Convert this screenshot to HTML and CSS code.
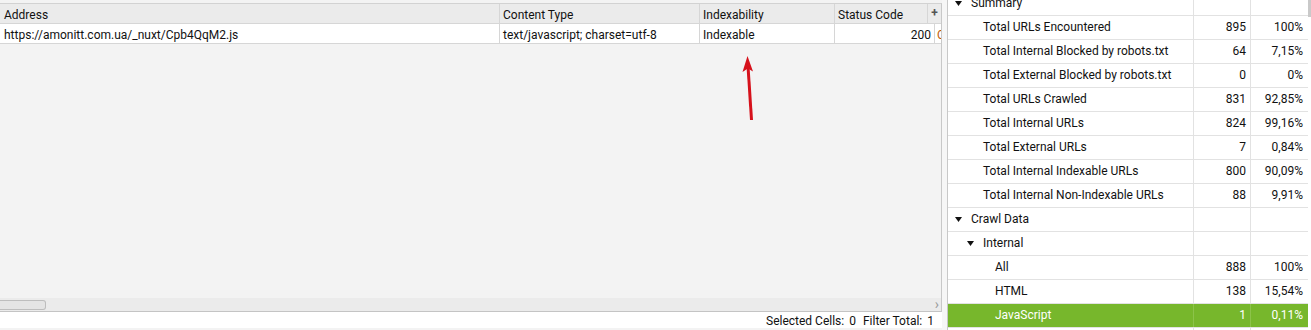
FILE: index.html
```html
<!DOCTYPE html>
<html lang="en">
<head>
    <meta charset="UTF-8">
    <title>Crawl Overview</title>
    <link rel="stylesheet" href="styles.css">
</head>
<body>
    <div class="app">
        <div class="main">
            <div class="grid">
                <div class="row head">
                    <div class="cell c-address">Address</div>
                    <div class="cell c-type">Content Type</div>
                    <div class="cell c-index">Indexability</div>
                    <div class="cell c-status-h">Status Code</div>
                    <div class="cell c-plus">+</div>
                </div>
                <div class="row data">
                    <div class="cell c-address">https://amonitt.com.ua/_nuxt/Cpb4QqM2.js</div>
                    <div class="cell c-type">text/javascript; charset=utf-8</div>
                    <div class="cell c-index">Indexable</div>
                    <div class="cell c-status num">200</div>
                    <div class="cell c-rest">OK</div>
                </div>
                <div class="empty">
                    <svg class="arrow" width="20" height="66" viewBox="0 0 20 66">
                        <path d="M11.5 64 L8 10" stroke="#d6111b" stroke-width="3" fill="none"/>
                        <path d="M7.5 0 L2.5 16 L7.8 12.5 L13 15.5 Z" fill="#d6111b"/>
                    </svg>
                </div>
                <div class="hscroll">
                    <div class="thumb"></div>
                    <span class="chev">&rsaquo;</span>
                </div>
            </div>
            <div class="status">
                <span>Selected Cells:</span><span class="val">0</span>
                <span>Filter Total:</span><span class="val">1</span>
            </div>
        </div>
        <div class="splitter"></div>
        <div class="side">
            <div class="tree">
                <div class="tr"><div class="t lvl0"><svg class="tri" width="7" height="5"><path d="M0 0H7L3.5 5Z"/></svg>Summary</div><div class="n"></div><div class="p"></div></div>
                <div class="tr"><div class="t lvl1">Total URLs Encountered</div><div class="n">895</div><div class="p">100%</div></div>
                <div class="tr"><div class="t lvl1">Total Internal Blocked by robots.txt</div><div class="n">64</div><div class="p">7,15%</div></div>
                <div class="tr"><div class="t lvl1">Total External Blocked by robots.txt</div><div class="n">0</div><div class="p">0%</div></div>
                <div class="tr"><div class="t lvl1">Total URLs Crawled</div><div class="n">831</div><div class="p">92,85%</div></div>
                <div class="tr"><div class="t lvl1">Total Internal URLs</div><div class="n">824</div><div class="p">99,16%</div></div>
                <div class="tr"><div class="t lvl1">Total External URLs</div><div class="n">7</div><div class="p">0,84%</div></div>
                <div class="tr"><div class="t lvl1">Total Internal Indexable URLs</div><div class="n">800</div><div class="p">90,09%</div></div>
                <div class="tr"><div class="t lvl1">Total Internal Non-Indexable URLs</div><div class="n">88</div><div class="p">9,91%</div></div>
                <div class="tr"><div class="t lvl0"><svg class="tri" width="7" height="5"><path d="M0 0H7L3.5 5Z"/></svg>Crawl Data</div><div class="n"></div><div class="p"></div></div>
                <div class="tr"><div class="t lvl1b"><svg class="tri" width="7" height="5"><path d="M0 0H7L3.5 5Z"/></svg>Internal</div><div class="n"></div><div class="p"></div></div>
                <div class="tr"><div class="t lvl2">All</div><div class="n">888</div><div class="p">100%</div></div>
                <div class="tr"><div class="t lvl2">HTML</div><div class="n">138</div><div class="p">15,54%</div></div>
                <div class="tr active"><div class="t lvl2">JavaScript</div><div class="n">1</div><div class="p">0,11%</div></div>
                <div class="tr"><div class="t lvl2"></div><div class="n"></div><div class="p"></div></div>
            </div>
            <div class="vthumb"></div>
        </div>
    </div>
</body>
</html>
```

FILE: styles.css
```css
body {
    margin: 0;
    font-family: Roboto, "Liberation Sans", sans-serif;
    font-size: 12px;
    color: #111;
    background: #f3f3f3;
}
.app {
    display: flex;
    width: 1311px;
    height: 330px;
    overflow: hidden;
}
.main {
    width: 942px;
    display: flex;
    flex-direction: column;
    padding-top: 3px;
    box-sizing: border-box;
}
.grid {
    position: relative;
    flex: 1;
    display: flex;
    flex-direction: column;
    border-top: 1px solid #d2d2d2;
    border-right: 1px solid #c8c8c8;
}
.row {
    display: flex;
    height: 19px;
    border-bottom: 1px solid #d6d6d6;
}
.head {
    background: #ebebeb;
}
.data {
    background: #fff;
}
.cell {
    box-sizing: border-box;
    padding: 0 3px;
    line-height: 23px;
    white-space: nowrap;
    overflow: hidden;
    border-right: 1px solid #d6d6d6;
}
.c-address { width: 500px; padding-left: 4px; }
.c-type { width: 200px; }
.c-index { width: 135px; }
.c-status-h { width: 93px; }
.c-status { width: 100px; }
.c-plus {
    flex: 1;
    border-right: 0;
    padding: 0;
    line-height: 19px;
    text-align: center;
    font-weight: bold;
    color: #555;
}
.c-rest {
    flex: 1;
    border-right: 0;
    padding: 0 0 0 2px;
    color: #c05a00;
}
.num {
    text-align: right;
}
.empty {
    flex: 1;
    position: relative;
}
.arrow {
    position: absolute;
    left: 740px;
    top: 12px;
}
.hscroll {
    display: flex;
    align-items: center;
    height: 13px;
    background: #ebebeb;
    border-bottom: 1px solid #c4c4c4;
}
.thumb {
    width: 45px;
    height: 8px;
    border: 1px solid #bdbdbd;
    border-left: 0;
    border-radius: 0 3px 3px 0;
    background: #e4e4e4;
}
.chev {
    margin-left: auto;
    margin-right: 2px;
    color: #9a9a9a;
    font-size: 14px;
    line-height: 13px;
}
.status {
    display: flex;
    justify-content: flex-end;
    gap: 5px;
    height: 16px;
    line-height: 19px;
    padding-right: 6px;
    background: #fff;
    margin-bottom: 2px;
}
.status .val {
    margin-right: 2px;
}
.splitter {
    width: 5px;
    background: #f6f6f6;
}
.side {
    position: relative;
    flex: 1;
    overflow: hidden;
    background: #fff;
    border-left: 1px solid #c8c8c8;
}
.tree {
    margin-top: -8px;
    width: 360px;
}
.tr {
    display: grid;
    grid-template-columns: 245px 57px 58px;
    height: 24px;
    box-sizing: border-box;
    border-bottom: 1px solid #e2e2e2;
}
.tr > div {
    line-height: 23px;
    white-space: nowrap;
}
.n,
.p {
    text-align: right;
    border-left: 1px solid #e2e2e2;
    padding-right: 4px;
}
.p {
    padding-right: 5px;
}
.t {
    display: flex;
    align-items: center;
}
.lvl0 { padding-left: 7px; }
.lvl1 { padding-left: 35px; }
.lvl1b { padding-left: 19px; }
.lvl2 { padding-left: 47px; }
.tri {
    fill: #111;
    margin-right: 9px;
}
.active {
    background: #77b72c;
    color: #fff;
}
.active > div {
    border-color: #8cc34a;
}
.vthumb {
    position: absolute;
    right: 0;
    top: 0;
    width: 3px;
    height: 17px;
    background: #c9c9c9;
}
```
